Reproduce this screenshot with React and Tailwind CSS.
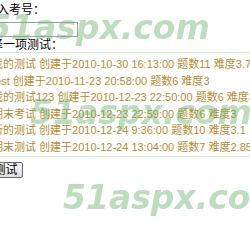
import React from "react";

const rows = [
  ["我的测试", "2010-10-30 16:13:00", "11", "3.72"],
  ["test", "2010-11-23 20:58:00", "6", "3"],
  ["我的测试123", "2010-12-23 22:50:00", "6", "3"],
  ["期末考试", "2010-12-23 22:59:00", "6", "3"],
  ["新的测试", "2010-12-24 9:36:00", "10", "3.1"],
  ["期末测试", "2010-12-24 13:04:00", "7", "2.857"],
];

function Mark({ cls }) {
  return (
    <span
      className={
        "pointer-events-none absolute whitespace-nowrap text-[33px] leading-[33px] font-bold italic text-[rgba(110,180,110,0.45)] blur-[0.6px] [font-family:'DejaVu_Sans',Verdana,sans-serif] " +
        cls
      }
    >
      51aspx.com
    </span>
  );
}

export default function App() {
  return (
    <div className="relative w-[250px] h-[230px] overflow-hidden bg-white text-black [font-family:'Liberation_Sans','Noto_Sans_CJK_SC',sans-serif]">
      <div className="h-[20px] leading-[20px] text-[12px] -ml-[27px] whitespace-nowrap">请输入考号：</div>
      <input
        type="text"
        className="block mt-[2px] -ml-[27px] w-[105px] h-[15px] border border-[#a0a0a0] bg-white outline-none"
      />
      <div className="mt-[1px] h-[14px] leading-[14px] text-[12px] -ml-[33px] whitespace-nowrap">请选择一项测试：</div>
      <div className="border-y border-[#cfeccf] pt-[3px] pb-[1px] text-[11px] text-[#b98d35]">
        {rows.map((r, i) => (
          <div key={i} className="h-[16.5px] leading-[16.5px] whitespace-nowrap -ml-[8px]">
            {r[0]} 创建于{r[1]} 题数{r[2]} 难度{r[3]}
          </div>
        ))}
      </div>
      <button className="block mt-[5px] -ml-[12px] w-[35px] h-[16px] leading-[14px] text-[12px] border border-[#6a6a6a] rounded-[2px] bg-gradient-to-b from-[#f6f6f6] to-[#dedede] text-black">
        测试
      </button>
      <Mark cls="left-[-12px] top-[11px]" />
      <Mark cls="left-[30px] top-[96px]" />
      <Mark cls="left-[63px] top-[181px]" />
    </div>
  );
}
